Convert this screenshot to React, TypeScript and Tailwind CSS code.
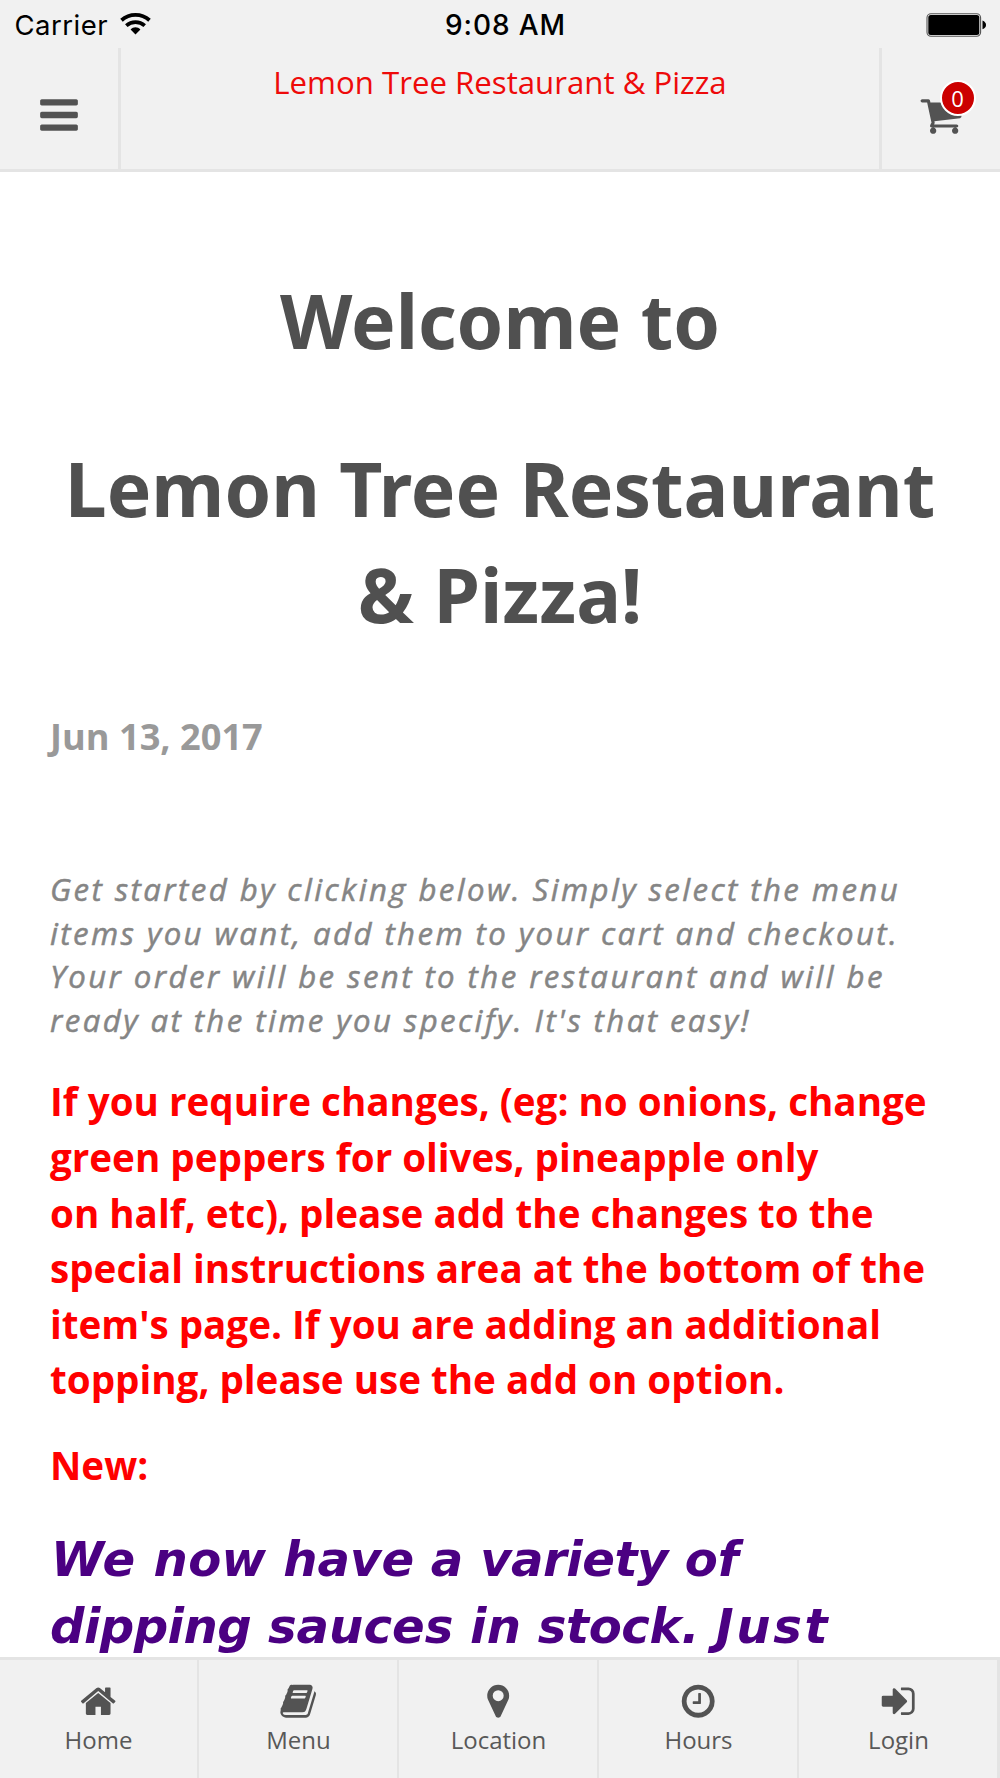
const icons = {
  bars: "M1664 1344v128q0 26-19 45t-45 19h-1408q-26 0-45-19t-19-45v-128q0-26 19-45t45-19h1408q26 0 45 19t19 45zm0-512v128q0 26-19 45t-45 19h-1408q-26 0-45-19t-19-45v-128q0-26 19-45t45-19h1408q26 0 45 19t19 45zm0-512v128q0 26-19 45t-45 19h-1408q-26 0-45-19t-19-45v-128q0-26 19-45t45-19h1408q26 0 45 19t19 45z",
  cart: "M704 1536q0 52-38 90t-90 38-90-38-38-90 38-90 90-38 90 38 38 90zm896 0q0 52-38 90t-90 38-90-38-38-90 38-90 90-38 90 38 38 90zm128-1088v512q0 24-16.500 42.500t-40.500 21.500l-1044 122q13 60 13 70 0 16-24 64h920q26 0 45 19t19 45-19 45-45 19h-1024q-26 0-45-19t-19-45q0-11 8-31.500t16-36 21.500-40 15.500-29.500l-177-823h-204q-26 0-45-19t-19-45 19-45 45-19h256q16 0 28.500 6.500t19.500 15.500 13 24.500 8 26 5.500 29.500 4.500 26h1201q26 0 45 19t19 45z",
  home: "M1472 992v480q0 26-19 45t-45 19h-384v-384h-256v384h-384q-26 0-45-19t-19-45v-480q0-1 .5-3t.5-3l575-474 575 474q1 2 1 6zm223-69l-62 74q-8 9-21 11h-3q-13 0-21-7l-692-577-692 577q-12 8-24 7-13-2-21-11l-62-74q-8-10-7-23.500t11-21.500l719-599q32-26 76-26t76 26l244 204v-195q0-14 9-23t23-9h192q14 0 23 9t9 23v408l219 182q10 8 11 21.500t-7 23.500z",
  book: "M1703 478q40 57 18 129l-275 906q-19 64-76.500 107.500t-122.500 43.500h-923q-77 0-148.500-53.500t-99.500-131.500q-24-67-2-127 0-4 3-27t4-37q1-8-3-21.500t-3-19.500q2-11 8-21t16.500-23.500 16.500-23.500q23-38 45-91.500t30-91.500q3-10 .5-30t-.5-28q3-11 17-28t17-23q21-36 42-92t25-90q1-9-2.500-32t.5-28q4-13 22-30.500t22-22.500q19-26 42.500-84.500t27.500-96.500q1-8-3-25.500t-2-26.500q2-8 9-18t18-23 17-21q8-12 16.500-30.500t15-35 16-36 19.500-32 26.500-23.500 36-11.500 47.500 5.500l-1 3q38-9 51-9h761q74 0 114 56t18 130l-274 906q-36 119-71.500 153.500t-128.500 34.500h-869q-27 0-38 15-11 16-1 43 24 70 144 70h923q29 0 56-15.500t35-41.500l300-987q7-22 5-57 38 15 59 43zm-1064 2q-4 13 2 22.500t20 9.500h608q13 0 25.500-9.500t16.500-22.500l21-64q4-13-2-22.500t-20-9.500h-608q-13 0-25.500 9.500t-16.500 22.500zm-83 256q-4 13 2 22.500t20 9.500h608q13 0 25.500-9.500t16.500-22.500l21-64q4-13-2-22.500t-20-9.500h-608q-13 0-25.500 9.500t-16.500 22.500z",
  marker: "M1152 640q0-106-75-181t-181-75-181 75-75 181 75 181 181 75 181-75 75-181zm256 0q0 109-33 179l-364 774q-16 33-47.500 52t-67.500 19-67.500-19-46.500-52l-365-774q-33-70-33-179 0-212 150-362t362-150 362 150 150 362z",
  clock: "M1024 544v448q0 14-9 23t-23 9h-320q-14 0-23-9t-9-23v-64q0-14 9-23t23-9h224v-352q0-14 9-23t23-9h64q14 0 23 9t9 23zm416 352q0-148-73-273t-198-198-273-73-273 73-198 198-73 273 73 273 198 198 273 73 273-73 198-198 73-273zm224 0q0 209-103 385.500t-279.500 279.500-385.500 103-385.500-103-279.500-279.500-103-385.500 103-385.500 279.500-279.500 385.500-103 385.500 103 279.500 279.500 103 385.500z",
  login: "M1312 896q0 26-19 45l-544 544q-19 19-45 19t-45-19-19-45v-288h-448q-26 0-45-19t-19-45v-384q0-26 19-45t45-19h448v-288q0-26 19-45t45-19 45 19l544 544q19 19 19 45zm352-352v704q0 119-84.500 203.500t-203.500 84.500h-320q-13 0-22.500-9.500t-9.500-22.500q0-4-1-20t-.5-26.500 3-23.500 10-19.500 20.500-6.500h320q66 0 113-47t47-113v-704q0-66-47-113t-113-47h-312l-11.500-1-11.500-3-8-5.500-7-9-2-13.500q0-4-1-20t-.5-26.500 3-23.500 10-19.500 20.500-6.500h320q119 0 203.500 84.500t84.500 203.500z",
};

function Icon({ name, className }: { name: keyof typeof icons; className: string }) {
  return (
    <svg viewBox="0 0 1792 1792" className={className} fill="#535353" aria-hidden="true">
      <path d={icons[name]} />
    </svg>
  );
}

function StatusBar() {
  return (
    <div className="grid h-12 grid-cols-3 items-start pt-[8px] font-['Inter',sans-serif] leading-[35px] text-black">
      <div className="flex pl-[14.500px]">
        <span className="text-[27.500px] tracking-[0.500px]">Carrier</span>
        <svg className="mt-[5px] ml-[12px] h-[22px] w-[31px]" viewBox="0 0 31 22" fill="none" stroke="#000" strokeWidth="3.800">
          <path d="M1.500 7.200C9.500 0.200 21.500 0.200 29.500 7.200" />
          <path d="M6.300 12.600C11.600 8 19.400 8 24.700 12.600" />
          <path d="M15.500 21.500L10.600 16.500C13.300 13.600 17.700 13.600 20.400 16.500Z" fill="#000" stroke="none" />
        </svg>
      </div>
      <div className="pl-[11px] text-center text-[28px] font-medium tracking-[0.900px]">9:08 AM</div>
      <div className="flex justify-end pr-[14px]">
        <svg className="mt-[5px] h-[24px] w-[60px]" viewBox="0 0 60 24">
          <rect x="1" y="0.700" width="53.600" height="22.600" rx="4" fill="none" stroke="#555" strokeWidth="1.100" />
          <rect x="2.300" y="2" width="51" height="20" rx="2.500" />
          <path d="M56.500 7.500Q60 9 60 12T56.500 16.200Z" />
        </svg>
      </div>
    </div>
  );
}

function Header() {
  return (
    <header className="shrink-0 border-b-[3px] border-[#e4e4e4] bg-[#f1f1f1]">
      <StatusBar />
      <div className="flex h-[121px]">
        <button className="flex w-[121px] items-start border-r-[3px] border-[#e4e4e4] pt-[45px] pl-[37px]" aria-label="Menu">
          <Icon name="bars" className="size-[44px]" />
        </button>
        <div className="flex-1 pt-[12px] text-center text-[31.200px] leading-[45px] text-[#ee0a0a]">Lemon Tree Restaurant &amp; Pizza</div>
        <button className="flex w-[121px] items-start border-l-[3px] border-[#e4e4e4] pt-[45px] pl-[36.500px]" aria-label="Cart">
          <span className="relative block size-[44px]">
            <Icon name="cart" className="size-[44px]" />
            <span className="absolute top-[-13.500px] left-[21px] flex size-[36px] items-center justify-center rounded-full border-2 border-white bg-[#cc0000] text-[22px] leading-none text-white">0</span>
          </span>
        </button>
      </div>
    </header>
  );
}

const tabs: { label: string; icon: keyof typeof icons }[] = [
  { label: "Home", icon: "home" },
  { label: "Menu", icon: "book" },
  { label: "Location", icon: "marker" },
  { label: "Hours", icon: "clock" },
  { label: "Login", icon: "login" },
];

export default function App() {
  return (
    <div className="flex h-[1778px] w-[1000px] flex-col overflow-hidden bg-white font-['Open_Sans',sans-serif]">
      <Header />
      <main className="min-h-0 flex-1 overflow-hidden px-[50px] pt-[95px]">
        <div className="-mx-5 text-center font-['Noto_Sans',sans-serif] text-[74.900px] leading-[106px] font-bold text-[#505050]">
          <h1>Welcome to</h1>
          <h1 className="mt-[62px]">
            Lemon Tree Restaurant
            <br />
            &amp; Pizza!
          </h1>
        </div>
        <p className="mt-[64px] text-[36.200px] leading-[50px] font-bold text-[#999]">Jun 13, 2017</p>
        <p className="mt-[107px] text-[31.200px] leading-[43.600px] tracking-[2.410px] whitespace-nowrap text-[#858585] italic [-webkit-text-stroke:0.500px_#858585]">
          Get started by clicking below. Simply select the menu
          <br />
          items you want, add them to your cart and checkout.
          <br />
          Your order will be sent to the restaurant and will be
          <br />
          ready at the time you specify. It's that easy!
        </p>
        <div className="text-[38.600px] leading-[55.600px] font-bold whitespace-nowrap text-[#ff0000]">
          <p className="mt-[32px]">
            If you require changes, (eg: no onions, change
            <br />
            green peppers for olives, pineapple only
            <br />
            on half, etc), please add the changes to the
            <br />
            special instructions area at the bottom of the
            <br />
            item's page. If you are adding an additional
            <br />
            topping, please use the add on option.
          </p>
          <p className="mt-[30px]">New:</p>
        </div>
        <p className="mt-[32px] font-['DejaVu_Sans',sans-serif] text-[48.200px] leading-[67.400px] font-bold whitespace-nowrap text-[#4b0082] italic">
          <span className="ml-px tracking-[1.500px]">We</span> <span className="tracking-[0.300px]">now</span> have a <span className="tracking-[-0.500px]">variety</span> of
          <br />
          <span className="tracking-[-0.600px]">dipping</span> sauces in <span className="tracking-[-0.400px]">stock.</span> <span className="tracking-[2.600px]">Just</span>
        </p>
      </main>
      <nav className="-ml-px grid h-[121px] w-[1000px] shrink-0 grid-cols-5 border-t-[3px] border-[#e4e4e4] bg-[#f1f1f1] shadow-[1px_0_0_#e4e4e4]">
        {tabs.map((tab) => (
          <a key={tab.label} className="flex flex-col items-center border-r-2 border-[#e4e4e4] pt-[22px]">
            <Icon name={tab.icon} className="size-[38.400px]" />
            <span className="mt-[3px] pl-px text-[24px] leading-[34px] text-[#585858]">{tab.label}</span>
          </a>
        ))}
      </nav>
    </div>
  );
}
